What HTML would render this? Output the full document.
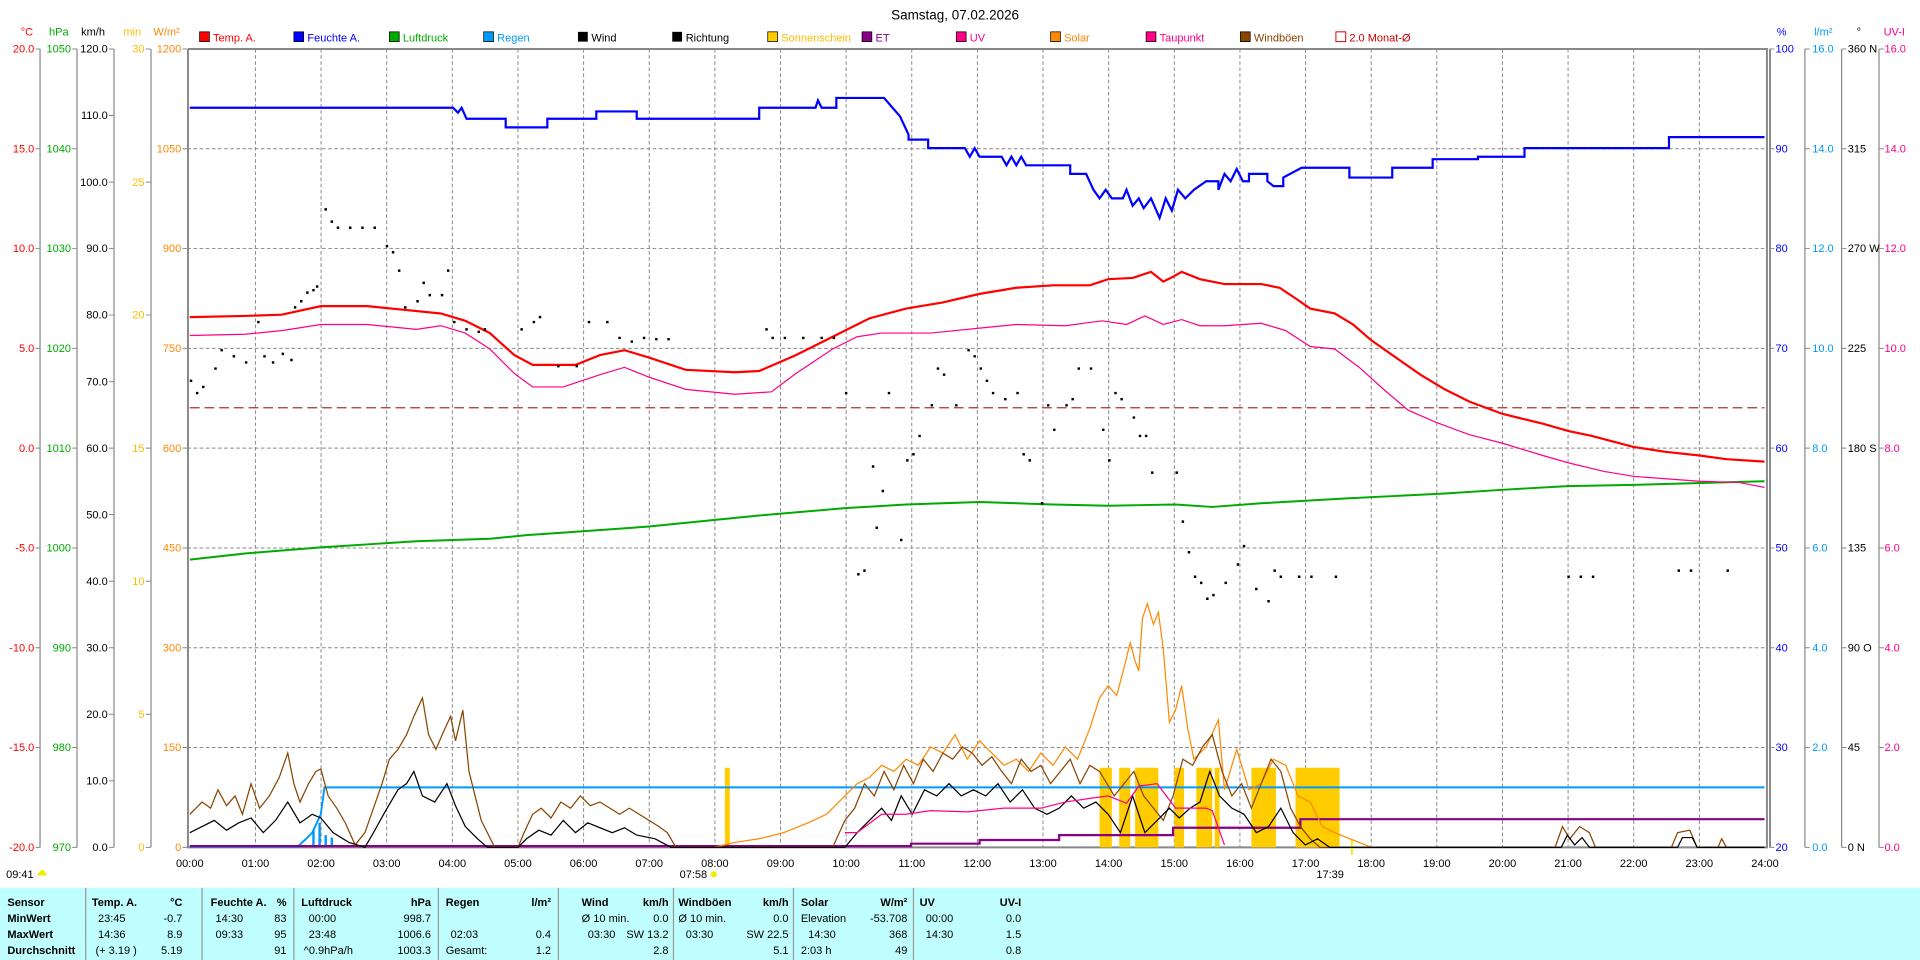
<!DOCTYPE html>
<html><head><meta charset="utf-8"><style>
html,body{margin:0;padding:0;background:#fff;overflow:hidden}
svg{display:block}
text{font-family:"Liberation Sans",sans-serif;font-size:9px}
.r{text-anchor:end}.m{text-anchor:middle}.b{font-weight:bold}
</style></head><body>
<svg width="1920" height="960" viewBox="0 0 1568 784" xmlns="http://www.w3.org/2000/svg">
<rect width="1568" height="784" fill="#fff"/>
<text x="780" y="16" class="m" font-size="11" style="font-size:11px">Samstag, 07.02.2026</text>
<!-- legend -->
<g>
<rect x="163" y="26" width="8" height="8" fill="#f00" stroke="#000" stroke-width=".6"/><text x="174" y="34" fill="#f00">Temp. A.</text>
<rect x="240" y="26" width="8" height="8" fill="#00f" stroke="#000" stroke-width=".6"/><text x="251" y="34" fill="#00f">Feuchte A.</text>
<rect x="318" y="26" width="8" height="8" fill="#0a0" stroke="#000" stroke-width=".6"/><text x="329" y="34" fill="#0a0">Luftdruck</text>
<rect x="395" y="26" width="8" height="8" fill="#09f" stroke="#000" stroke-width=".6"/><text x="406" y="34" fill="#09f">Regen</text>
<rect x="472" y="26" width="8" height="8" fill="#000"/><text x="483" y="34">Wind</text>
<rect x="549" y="26" width="8" height="8" fill="#000"/><text x="560" y="34">Richtung</text>
<rect x="627" y="26" width="8" height="8" fill="#fc0" stroke="#000" stroke-width=".6"/><text x="638" y="34" fill="#fb0">Sonnenschein</text>
<rect x="704" y="26" width="8" height="8" fill="#808" stroke="#000" stroke-width=".6"/><text x="715" y="34" fill="#808">ET</text>
<rect x="781" y="26" width="8" height="8" fill="#f08" stroke="#000" stroke-width=".6"/><text x="792" y="34" fill="#f08">UV</text>
<rect x="858" y="26" width="8" height="8" fill="#f80" stroke="#000" stroke-width=".6"/><text x="869" y="34" fill="#f80">Solar</text>
<rect x="936" y="26" width="8" height="8" fill="#f08" stroke="#000" stroke-width=".6"/><text x="947" y="34" fill="#f08">Taupunkt</text>
<rect x="1013" y="26" width="8" height="8" fill="#840" stroke="#000" stroke-width=".6"/><text x="1024" y="34" fill="#840">Windböen</text>
<rect x="1091" y="26" width="8" height="8" fill="#fff" stroke="#c00" stroke-width=".8"/><text x="1102" y="34" fill="#c00">2.0 Monat-Ø</text>
</g>
<!-- grid -->
<g stroke="#888" stroke-width=".8" stroke-dasharray="3,2" fill="none">
<path d="M153,121.5H1443M153,203H1443M153,284.5H1443M153,366H1443M153,447.5H1443M153,529H1443M153,610.5H1443"/>
<path d="M208.6,40V692M262.2,40V692M315.8,40V692M369.4,40V692M423,40V692M476.6,40V692M530.2,40V692M583.8,40V692M637.4,40V692M691,40V692M744.6,40V692M798.2,40V692M851.8,40V692M905.4,40V692M959,40V692M1012.6,40V692M1066.2,40V692M1119.8,40V692M1173.4,40V692M1227,40V692M1280.6,40V692M1334.2,40V692M1387.8,40V692"/>
</g>
<!-- axes -->
<g stroke="#888" fill="none">
<path d="M32.7,40V692M62.9,40V692M93.1,40V692M123.3,40V692M1474,40V692M1504,40V692M1534.5,40V692" stroke-width="1"/>
<path d="M153.5,40V692H1443V40H153.5M1445.5,40V692" stroke-width="1.6"/>
</g>
<g stroke="#888" stroke-width=".8">
<path d="M29,40H33M29,121.5H33M29,203H33M29,284.5H33M29,366H33M29,447.5H33M29,529H33M29,610.5H33M29,692H33"/>
<path d="M59,40H63M59,121.5H63M59,203H63M59,284.5H63M59,366H63M59,447.5H63M59,529H63M59,610.5H63M59,692H63"/>
<path d="M89,40H93M89,94.3H93M89,148.7H93M89,203H93M89,257.3H93M89,311.7H93M89,366H93M89,420.3H93M89,474.7H93M89,529H93M89,583.3H93M89,637.7H93M89,692H93"/>
<path d="M119,40H123M119,148.7H123M119,257.3H123M119,366H123M119,474.7H123M119,583.3H123M119,692H123"/>
<path d="M149,40H153M149,121.5H153M149,203H153M149,284.5H153M149,366H153M149,447.5H153M149,529H153M149,610.5H153M149,692H153"/>
<path d="M1445,40H1449M1445,121.5H1449M1445,203H1449M1445,284.5H1449M1445,366H1449M1445,447.5H1449M1445,529H1449M1445,610.5H1449M1445,692H1449"/>
<path d="M1474,40H1478M1474,121.5H1478M1474,203H1478M1474,284.5H1478M1474,366H1478M1474,447.5H1478M1474,529H1478M1474,610.5H1478M1474,692H1478"/>
<path d="M1504,40H1508M1504,121.5H1508M1504,203H1508M1504,284.5H1508M1504,366H1508M1504,447.5H1508M1504,529H1508M1504,610.5H1508M1504,692H1508"/>
<path d="M1534.5,40H1538.5M1534.5,121.5H1538.5M1534.5,203H1538.5M1534.5,284.5H1538.5M1534.5,366H1538.5M1534.5,447.5H1538.5M1534.5,529H1538.5M1534.5,610.5H1538.5M1534.5,692H1538.5"/>
</g>
<!-- axis units -->
<text x="22" y="29" class="m" fill="#f00">°C</text><text x="48" y="29" class="m" fill="#0a0">hPa</text><text x="76" y="29" class="m">km/h</text><text x="108" y="29" class="m" fill="#fb0">min</text><text x="136" y="29" class="m" fill="#f80">W/m²</text>
<text x="1455" y="29" class="m" fill="#00f">%</text><text x="1489" y="29" class="m" fill="#09f">l/m²</text><text x="1518" y="29" class="m">°</text><text x="1547" y="29" class="m" fill="#f08">UV-I</text>
<!-- left labels -->
<g fill="#f00" class="r"><text x="28" y="43" class="r">20.0</text><text x="28" y="124.5" class="r">15.0</text><text x="28" y="206" class="r">10.0</text><text x="28" y="287.5" class="r">5.0</text><text x="28" y="369" class="r">0.0</text><text x="28" y="450.5" class="r">-5.0</text><text x="28" y="532" class="r">-10.0</text><text x="28" y="613.5" class="r">-15.0</text><text x="28" y="695" class="r">-20.0</text></g>
<g fill="#0a0"><text x="58" y="43" class="r">1050</text><text x="58" y="124.5" class="r">1040</text><text x="58" y="206" class="r">1030</text><text x="58" y="287.5" class="r">1020</text><text x="58" y="369" class="r">1010</text><text x="58" y="450.5" class="r">1000</text><text x="58" y="532" class="r">990</text><text x="58" y="613.5" class="r">980</text><text x="58" y="695" class="r">970</text></g>
<g><text x="88" y="43" class="r">120.0</text><text x="88" y="97.3" class="r">110.0</text><text x="88" y="151.7" class="r">100.0</text><text x="88" y="206" class="r">90.0</text><text x="88" y="260.3" class="r">80.0</text><text x="88" y="314.7" class="r">70.0</text><text x="88" y="369" class="r">60.0</text><text x="88" y="423.3" class="r">50.0</text><text x="88" y="477.7" class="r">40.0</text><text x="88" y="532" class="r">30.0</text><text x="88" y="586.3" class="r">20.0</text><text x="88" y="640.7" class="r">10.0</text><text x="88" y="695" class="r">0.0</text></g>
<g fill="#fb0"><text x="118" y="43" class="r">30</text><text x="118" y="151.7" class="r">25</text><text x="118" y="260.3" class="r">20</text><text x="118" y="369" class="r">15</text><text x="118" y="477.7" class="r">10</text><text x="118" y="586.3" class="r">5</text><text x="118" y="695" class="r">0</text></g>
<g fill="#f80"><text x="148" y="43" class="r">1200</text><text x="148" y="124.5" class="r">1050</text><text x="148" y="206" class="r">900</text><text x="148" y="287.5" class="r">750</text><text x="148" y="369" class="r">600</text><text x="148" y="450.5" class="r">450</text><text x="148" y="532" class="r">300</text><text x="148" y="613.5" class="r">150</text><text x="148" y="695" class="r">0</text></g>
<!-- right labels -->
<g fill="#00f"><text x="1450" y="43">100</text><text x="1450" y="124.5">90</text><text x="1450" y="206">80</text><text x="1450" y="287.5">70</text><text x="1450" y="369">60</text><text x="1450" y="450.5">50</text><text x="1450" y="532">40</text><text x="1450" y="613.5">30</text><text x="1450" y="695">20</text></g>
<g fill="#09f"><text x="1480" y="43">16.0</text><text x="1480" y="124.5">14.0</text><text x="1480" y="206">12.0</text><text x="1480" y="287.5">10.0</text><text x="1480" y="369">8.0</text><text x="1480" y="450.5">6.0</text><text x="1480" y="532">4.0</text><text x="1480" y="613.5">2.0</text><text x="1480" y="695">0.0</text></g>
<g><text x="1509" y="43">360 N</text><text x="1509" y="124.5">315</text><text x="1509" y="206">270 W</text><text x="1509" y="287.5">225</text><text x="1509" y="369">180 S</text><text x="1509" y="450.5">135</text><text x="1509" y="532">90 O</text><text x="1509" y="613.5">45</text><text x="1509" y="695">0 N</text></g>
<g fill="#f08"><text x="1539" y="43">16.0</text><text x="1539" y="124.5">14.0</text><text x="1539" y="206">12.0</text><text x="1539" y="287.5">10.0</text><text x="1539" y="369">8.0</text><text x="1539" y="450.5">6.0</text><text x="1539" y="532">4.0</text><text x="1539" y="613.5">2.0</text><text x="1539" y="695">0.0</text></g>
<!-- hour labels -->
<g class="m"><text x="155" y="708" class="m">00:00</text><text x="208.6" y="708" class="m">01:00</text><text x="262.2" y="708" class="m">02:00</text><text x="315.8" y="708" class="m">03:00</text><text x="369.4" y="708" class="m">04:00</text><text x="423" y="708" class="m">05:00</text><text x="476.6" y="708" class="m">06:00</text><text x="530.2" y="708" class="m">07:00</text><text x="583.8" y="708" class="m">08:00</text><text x="637.4" y="708" class="m">09:00</text><text x="691" y="708" class="m">10:00</text><text x="744.6" y="708" class="m">11:00</text><text x="798.2" y="708" class="m">12:00</text><text x="851.8" y="708" class="m">13:00</text><text x="905.4" y="708" class="m">14:00</text><text x="959" y="708" class="m">15:00</text><text x="1012.6" y="708" class="m">16:00</text><text x="1066.2" y="708" class="m">17:00</text><text x="1119.8" y="708" class="m">18:00</text><text x="1173.4" y="708" class="m">19:00</text><text x="1227" y="708" class="m">20:00</text><text x="1280.6" y="708" class="m">21:00</text><text x="1334.2" y="708" class="m">22:00</text><text x="1387.8" y="708" class="m">23:00</text><text x="1441.4" y="708" class="m">24:00</text></g>
<text x="5" y="717">09:41</text><path d="M32,713a2.5,2.5 0 1,1 5,0z" fill="#ee0"/><rect x="31" y="713" width="7" height="2" fill="#ee0"/>
<text x="555" y="717">07:58</text><circle cx="583" cy="714" r="2.5" fill="#ee0"/>
<text x="1075" y="717">17:39</text>
<!-- sunshine bars -->
<g fill="#fc0"><rect x="592" y="627" width="4" height="65"/><rect x="898" y="627" width="10" height="65"/><rect x="914" y="627" width="9" height="65"/><rect x="927" y="627" width="19" height="65"/><rect x="959" y="627" width="8" height="65"/><rect x="977" y="627" width="13" height="65"/><rect x="992" y="627" width="4" height="65"/><rect x="1022" y="627" width="20" height="65"/><rect x="1058" y="627" width="36" height="65"/></g>
<path d="M1104,686V698" stroke="#ee0" stroke-width="1.5"/>
<!-- rain -->
<path d="M155,691.5H243L250,685L255,680L262,665L265,643H1441" stroke="#09f" stroke-width="1.6" fill="none"/>
<g fill="#09f"><rect x="255" y="678" width="2" height="14"/><rect x="260" y="672" width="2" height="20"/><rect x="265" y="682" width="2" height="10"/><rect x="270" y="684" width="2" height="8"/></g>
<!-- dashed monthly -->
<path d="M155,333H1441" stroke="#a33" stroke-width="1" stroke-dasharray="8,4" fill="none"/>
<!-- ET -->
<path d="M155,691H744V689H800V686H865V682H958V676H1062V669H1441" stroke="#808" stroke-width="1.8" fill="none"/>
<!-- solar -->
<polyline fill="none" stroke="#f80" stroke-width="1" points="583,692 600,688 620,685 640,680 660,672 675,665 690,650 700,640 710,635 720,625 730,630 740,620 750,625 760,610 770,615 780,600 790,620 800,605 810,615 820,625 830,620 840,630 850,615 860,625 870,610 880,620 890,595 898,570 905,560 912,568 918,545 923,525 927,540 930,548 933,505 937,493 942,510 946,500 950,530 955,590 960,580 965,560 970,595 975,620 985,610 995,588 1000,645 1010,612 1020,645 1030,640 1040,620 1050,625 1060,650 1070,655 1080,675 1090,680 1100,684 1120,692"/>
<!-- wind gusts -->
<polyline fill="none" stroke="#840" stroke-width="1" points="155,665 165,655 172,660 178,645 185,658 192,650 198,665 205,640 212,660 220,650 228,635 235,615 240,640 245,655 252,640 258,630 262,628 268,650 275,660 282,672 290,690 298,680 305,660 312,640 318,620 325,612 332,600 338,585 345,570 350,600 356,612 362,598 368,585 372,605 378,580 383,630 388,650 393,670 398,680 404,692 423,692 428,680 435,665 442,660 450,668 458,655 466,660 474,650 482,658 490,655 498,660 506,665 514,660 522,665 530,670 538,675 545,680 552,692 680,692 690,670 698,660 706,640 714,650 722,630 730,645 738,625 746,640 754,620 762,630 770,615 778,620 786,610 794,615 802,625 810,618 818,630 826,640 834,620 842,630 850,625 858,640 866,630 874,620 882,640 890,625 898,630 904,640 910,650 918,640 926,630 934,650 942,660 950,670 958,650 966,620 974,625 982,610 990,600 998,630 1006,650 1014,640 1022,660 1030,640 1038,620 1046,630 1054,660 1062,675 1070,685 1078,692 1270,692 1276,675 1282,685 1290,675 1298,680 1303,692 1365,692 1370,680 1380,678 1386,692 1403,692 1406,685 1410,692 1441,692"/>
<!-- wind -->
<polyline fill="none" stroke="#000" stroke-width="1" points="155,680 165,675 175,670 185,678 195,672 205,668 215,680 225,670 235,655 245,672 255,665 262,668 272,680 285,688 298,692 305,680 315,662 325,645 332,640 338,630 345,650 355,655 365,640 372,658 380,675 390,685 398,692 423,692 430,685 440,678 450,682 460,670 470,680 480,672 490,676 500,680 510,676 520,682 535,685 548,692 690,692 700,680 710,670 720,660 728,670 736,650 745,665 755,645 765,650 775,640 785,650 795,645 805,650 815,640 825,655 835,645 845,660 855,665 865,660 875,650 885,660 895,655 905,665 915,680 925,650 935,680 945,670 955,660 963,668 972,660 980,655 988,630 996,650 1006,660 1016,665 1026,680 1036,675 1046,660 1056,680 1066,690 1076,685 1086,692 1275,692 1280,682 1286,690 1292,684 1298,692 1370,692 1374,684 1382,684 1386,692 1441,692"/>
<!-- UV -->
<polyline fill="none" stroke="#f08" stroke-width="1" points="690,680 700,680 720,665 740,665 760,662 790,663 820,660 850,660 870,655 890,652 905,650 920,656 930,642 945,640 960,660 985,660 990,662 1000,690"/>
<!-- pressure -->
<polyline fill="none" stroke="#0a0" stroke-width="1.6" points="155,457 200,452 262,447 340,442 400,440 430,437 460,435 530,430 580,425 620,421 690,415 740,412 800,410 860,412 905,413 960,412 990,414 1030,411 1100,407 1140,405 1180,403 1227,400 1280,397 1334,396 1441,393"/>
<!-- dew point -->
<polyline fill="none" stroke="#f08" stroke-width="1" points="155,274 200,273 230,270 262,265 300,265 340,269 360,266 380,272 400,285 420,305 435,316 460,316 490,306 510,300 530,308 560,318 600,322 630,320 650,305 680,285 700,275 720,272 760,272 800,268 830,265 870,266 900,262 920,265 935,258 950,265 965,261 980,266 1000,266 1030,264 1050,270 1070,283 1090,285 1110,300 1130,318 1150,335 1173,345 1200,355 1227,362 1260,372 1281,378 1310,385 1334,389 1360,391 1388,393 1420,394 1441,398"/>
<!-- temp -->
<polyline fill="none" stroke="#f00" stroke-width="1.8" points="155,259 200,258 230,257 262,250 300,250 330,253 360,256 380,262 400,272 420,290 435,298 470,298 490,290 510,286 530,292 560,302 600,304 620,303 650,290 680,275 710,260 740,252 770,247 800,240 830,235 860,233 890,233 905,228 925,227 940,222 950,230 958,226 965,222 980,228 1000,232 1030,232 1045,235 1060,245 1070,252 1090,256 1105,265 1120,278 1140,292 1160,306 1180,318 1200,328 1227,338 1260,346 1281,352 1300,356 1334,365 1360,369 1388,372 1410,375 1441,377"/>
<!-- humidity -->
<path fill="none" stroke="#00f" stroke-width="1.8" d="M155,88H370L374,92L377,88L381,97H413V104H447V97H487V91H520V97H620V88H666L668,82L671,88H683V80H722L735,95L742,110V114H758V121H788L792,128L796,121L800,128H818L822,135L826,128L830,135L834,128L838,135H874V142H887L893,155L898,162L903,155L908,162H917L920,155L925,168L930,162L934,170L940,162L947,178L952,162L957,172L962,155L968,162L975,155L985,148H995V155L1000,142L1005,148L1010,138L1015,148H1020V142H1035V148L1040,152H1048V145L1063,137H1102V145H1137V137H1170V130H1207V128H1245V121H1363V112H1441"/>
<!-- direction dots -->
<g fill="#000" id="d"><path d="M155,310h2v2h-2zM160,320h2v2h-2zM165,315h2v2h-2zM175,300h2v2h-2zM180,285h2v2h-2zM190,290h2v2h-2zM200,295h2v2h-2zM210,262h2v2h-2zM215,290h2v2h-2zM222,295h2v2h-2zM230,288h2v2h-2zM237,293h2v2h-2zM240,250h2v2h-2zM245,245h2v2h-2zM250,238h2v2h-2zM255,236h2v2h-2zM258,233h2v2h-2zM265,170h2v2h-2zM270,180h2v2h-2zM275,185h2v2h-2zM285,185h2v2h-2zM295,185h2v2h-2zM305,185h2v2h-2zM315,200h2v2h-2zM320,205h2v2h-2zM325,220h2v2h-2zM330,250h2v2h-2zM340,245h2v2h-2zM345,230h2v2h-2zM350,240h2v2h-2zM360,240h2v2h-2zM365,220h2v2h-2zM370,262h2v2h-2zM380,268h2v2h-2zM390,270h2v2h-2zM395,268h2v2h-2zM425,268h2v2h-2zM435,262h2v2h-2zM440,258h2v2h-2zM455,298h2v2h-2zM470,298h2v2h-2zM480,262h2v2h-2zM495,262h2v2h-2zM505,275h2v2h-2zM515,278h2v2h-2zM525,275h2v2h-2zM535,276h2v2h-2zM545,276h2v2h-2zM625,268h2v2h-2zM630,275h2v2h-2zM640,275h2v2h-2zM655,275h2v2h-2zM670,275h2v2h-2zM680,275h2v2h-2zM690,320h2v2h-2zM700,468h2v2h-2zM705,465h2v2h-2zM712,380h2v2h-2zM715,430h2v2h-2zM720,400h2v2h-2zM725,320h2v2h-2zM735,440h2v2h-2zM740,375h2v2h-2zM745,370h2v2h-2zM750,355h2v2h-2zM760,330h2v2h-2zM765,300h2v2h-2zM770,305h2v2h-2zM780,330h2v2h-2zM790,285h2v2h-2zM795,290h2v2h-2zM800,300h2v2h-2zM805,310h2v2h-2zM810,320h2v2h-2zM820,325h2v2h-2zM830,320h2v2h-2zM835,370h2v2h-2zM840,375h2v2h-2zM850,410h2v2h-2zM855,330h2v2h-2zM860,350h2v2h-2zM870,330h2v2h-2zM875,325h2v2h-2zM880,300h2v2h-2zM890,300h2v2h-2zM900,350h2v2h-2zM905,375h2v2h-2zM910,320h2v2h-2zM915,325h2v2h-2zM925,340h2v2h-2zM930,355h2v2h-2zM935,355h2v2h-2zM940,385h2v2h-2zM960,385h2v2h-2zM965,425h2v2h-2zM970,450h2v2h-2zM975,470h2v2h-2zM980,475h2v2h-2zM985,488h2v2h-2zM990,485h2v2h-2zM1000,475h2v2h-2zM1010,460h2v2h-2zM1015,445h2v2h-2zM1025,480h2v2h-2zM1035,490h2v2h-2zM1040,465h2v2h-2zM1045,470h2v2h-2zM1060,470h2v2h-2zM1070,470h2v2h-2zM1090,470h2v2h-2zM1280,470h2v2h-2zM1290,470h2v2h-2zM1300,470h2v2h-2zM1370,465h2v2h-2zM1380,465h2v2h-2zM1410,465h2v2h-2z"/></g>
<!-- table -->
<rect x="0" y="725" width="1568" height="59" fill="#c0ffff"/>
<g stroke="#999" stroke-width="1"><path d="M70,725V784M165,725V784M240,725V784M358,725V784M456,725V784M550,725V784M648,725V784M746,725V784"/></g>
<g class="b">
<text x="6" y="740" class="b">Sensor</text><text x="6" y="753" class="b">MinWert</text><text x="6" y="766" class="b">MaxWert</text><text x="6" y="779" class="b">Durchschnitt</text>
<text x="75" y="740" class="b">Temp. A.</text><text x="149" y="740" class="r b">°C</text>
<text x="172" y="740" class="b">Feuchte A.</text><text x="234" y="740" class="r b">%</text>
<text x="246" y="740" class="b">Luftdruck</text><text x="352" y="740" class="r b">hPa</text>
<text x="364" y="740" class="b">Regen</text><text x="450" y="740" class="r b">l/m²</text>
<text x="475" y="740" class="b">Wind</text><text x="546" y="740" class="r b">km/h</text>
<text x="554" y="740" class="b">Windböen</text><text x="644" y="740" class="r b">km/h</text>
<text x="654" y="740" class="b">Solar</text><text x="741" y="740" class="r b">W/m²</text>
<text x="751" y="740" class="b">UV</text><text x="834" y="740" class="r b">UV-I</text>
</g>
<g>
<text x="80" y="753">23:45</text><text x="149" y="753" class="r">-0.7</text>
<text x="80" y="766">14:36</text><text x="149" y="766" class="r">8.9</text>
<text x="78" y="779">(+ 3.19 )</text><text x="149" y="779" class="r">5.19</text>
<text x="176" y="753">14:30</text><text x="234" y="753" class="r">83</text>
<text x="176" y="766">09:33</text><text x="234" y="766" class="r">95</text>
<text x="234" y="779" class="r">91</text>
<text x="252" y="753">00:00</text><text x="352" y="753" class="r">998.7</text>
<text x="252" y="766">23:48</text><text x="352" y="766" class="r">1006.6</text>
<text x="248" y="779">^0.9hPa/h</text><text x="352" y="779" class="r">1003.3</text>
<text x="368" y="766">02:03</text><text x="450" y="766" class="r">0.4</text>
<text x="364" y="779">Gesamt:</text><text x="450" y="779" class="r">1.2</text>
<text x="475" y="753">Ø 10 min.</text><text x="546" y="753" class="r">0.0</text>
<text x="480" y="766">03:30</text><text x="546" y="766" class="r">SW 13.2</text>
<text x="546" y="779" class="r">2.8</text>
<text x="554" y="753">Ø 10 min.</text><text x="644" y="753" class="r">0.0</text>
<text x="560" y="766">03:30</text><text x="644" y="766" class="r">SW 22.5</text>
<text x="644" y="779" class="r">5.1</text>
<text x="654" y="753">Elevation</text><text x="741" y="753" class="r">-53.708</text>
<text x="660" y="766">14:30</text><text x="741" y="766" class="r">368</text>
<text x="654" y="779">2:03 h</text><text x="741" y="779" class="r">49</text>
<text x="756" y="753">00:00</text><text x="834" y="753" class="r">0.0</text>
<text x="756" y="766">14:30</text><text x="834" y="766" class="r">1.5</text>
<text x="834" y="779" class="r">0.8</text>
</g>
</svg>
</body></html>
